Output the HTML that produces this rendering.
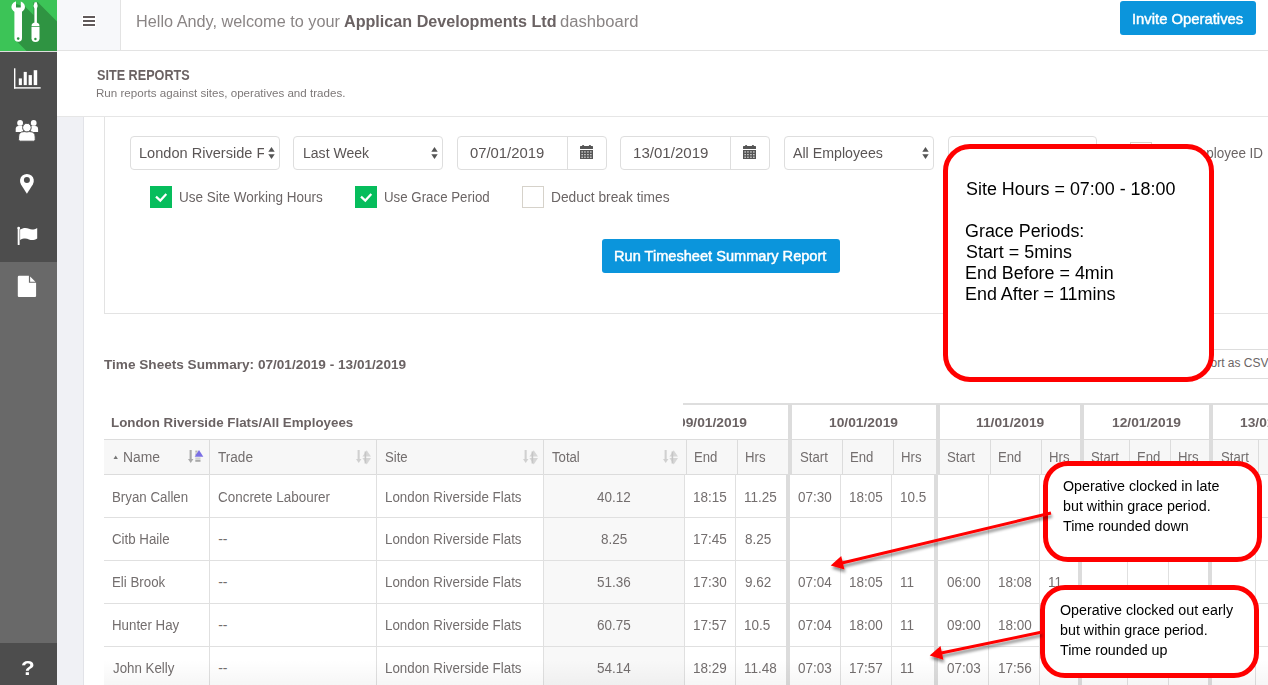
<!DOCTYPE html><html><head><meta charset="utf-8"><style>
html,body{margin:0;padding:0;width:1268px;height:685px;overflow:hidden;background:#fff;}
body{position:relative;font-family:"Liberation Sans", sans-serif;}
.t{position:absolute;white-space:nowrap;}
.b{position:absolute;box-sizing:border-box;}
svg{position:absolute;overflow:visible;}
</style></head><body>
<div class="b" style="left:57px;top:117px;width:27px;height:568px;background:#f0f1f5;border-right:1px solid #e2e3e8;"></div>
<div class="b" style="left:57px;top:0px;width:1211px;height:51px;background:#fff;border-bottom:1px solid #e3e3e3;"></div>
<div class="b" style="left:57px;top:0px;width:64px;height:50px;background:#f7f8fa;border-right:1px solid #e3e3e3;"></div>
<div class="b" style="left:82px;top:15px;width:14px;height:12px;background:#fff;"></div>
<div class="b" style="left:83px;top:16px;width:12px;height:2px;background:#615a5a;"></div>
<div class="b" style="left:83px;top:20px;width:12px;height:2px;background:#615a5a;"></div>
<div class="b" style="left:83px;top:24px;width:12px;height:2px;background:#615a5a;"></div>
<div class="t" style="left:135.68px;top:11.95px;font-size:16px;line-height:20px;color:#8a8585;transform:scaleX(1.0161);transform-origin:0 0;">Hello Andy, welcome to your</div>
<div class="t" style="left:343.60px;top:11.95px;font-size:16px;line-height:20px;color:#6a6263;font-weight:bold;transform:scaleX(1.0086);transform-origin:0 0;">Applican Developments Ltd</div>
<div class="t" style="left:559.87px;top:11.95px;font-size:16px;line-height:20px;color:#8a8585;transform:scaleX(1.0379);transform-origin:0 0;">dashboard</div>
<div class="b" style="left:1120px;top:1px;width:136px;height:34px;background:#0b95dc;border-radius:3px;"></div>
<div class="t" style="left:1132.22px;top:8.50px;font-size:15px;line-height:19px;color:#fff;transform:scaleX(0.9883);transform-origin:0 0;-webkit-text-stroke:0.45px #fff;">Invite Operatives</div>
<div class="b" style="left:57px;top:51px;width:1211px;height:66px;background:#fff;border-bottom:1px solid #e6e6e6;"></div>
<div class="t" style="left:96.64px;top:65.94px;font-size:14px;line-height:18px;color:#6a6263;font-weight:bold;transform:scaleX(0.9027);transform-origin:0 0;">SITE REPORTS</div>
<div class="t" style="left:96.05px;top:86.29px;font-size:11px;line-height:14px;color:#7d7878;transform:scaleX(1.0541);transform-origin:0 0;">Run reports against sites, operatives and trades.</div>
<div class="b" style="left:104px;top:117px;width:1164px;height:197px;border-left:1px solid #e3e3e3;border-bottom:1px solid #e3e3e3;"></div>
<div class="b" style="left:0px;top:0px;width:57px;height:685px;background:#4d4d4d;"></div>
<div class="b" style="left:0px;top:262px;width:57px;height:381px;background:#696969;"></div>
<div class="b" style="left:0px;top:51px;width:57px;height:1px;background:#dedede;"></div>
<svg style="left:0;top:0" width="57" height="51" viewBox="0 0 57 51">
<rect x="0" y="0" width="57" height="51" fill="#3cc457"/>
<polygon points="25,6.5 33.5,15 33.5,2 37.6,2 57,21.4 57,51 26.5,51 16.5,41 16,4" fill="#2f9442"/>
<mask id="jaw"><rect x="0" y="0" width="57" height="51" fill="#fff"/><rect x="16" y="-1" width="4.8" height="8.6" rx="0.6" fill="#000"/></mask>
<g mask="url(#jaw)" fill="#fff"><ellipse cx="18.2" cy="6.9" rx="6.8" ry="5.9"/><path d="M14.4,10 L22,10 L22,38 A3.8,3.8 0 0 1 14.4,38 Z"/></g>
<circle cx="18.2" cy="38.6" r="1.3" fill="#2f9442"/>
<path d="M34.6,2.3 L36.8,2.3 L37.7,6 L36.9,8.6 L36.9,23.5 L34.4,23.5 L34.4,8.6 L33.5,6 Z" fill="#fff"/>
<path d="M31.5,26.2 Q31.5,22.6 35.5,22.6 Q39.5,22.6 39.5,26.2 Z" fill="#fff"/>
<path d="M31.5,26.9 L39.5,26.9 L39.5,38.3 A4,3.6 0 0 1 31.5,38.3 Z" fill="#fff"/>
<circle cx="35.4" cy="39" r="1.2" fill="#2f9442"/>
</svg>
<svg style="left:0;top:60" width="57" height="40" viewBox="0 60 57 40">
<rect x="14" y="68.3" width="1.4" height="20.3" fill="#fff"/>
<rect x="14" y="87.2" width="26.7" height="1.4" fill="#fff"/>
<rect x="18.8" y="78.4" width="3.1" height="6.7" fill="#fff"/>
<rect x="23.7" y="71.9" width="3.1" height="13.2" fill="#fff"/>
<rect x="28.6" y="75.1" width="3.3" height="10" fill="#fff"/>
<rect x="33.7" y="70.2" width="3.5" height="14.9" fill="#fff"/>
</svg>
<svg style="left:0;top:110" width="57" height="40" viewBox="0 110 57 40">
<circle cx="20.1" cy="122.9" r="2.9" fill="#fff"/>
<circle cx="33.7" cy="122.9" r="2.9" fill="#fff"/>
<path d="M15.7,131.9 L15.7,129 Q15.7,126.1 18.6,126.1 L23,126.1 L23,131.9 Z" fill="#fff"/>
<path d="M38.1,131.9 L38.1,129 Q38.1,126.1 35.2,126.1 L30.8,126.1 L30.8,131.9 Z" fill="#fff"/>
<path d="M18.6,139.6 L18.6,137 Q18.6,131.6 24,131.6 L29.8,131.6 Q35.2,131.6 35.2,137 L35.2,139.6 Q35.2,141.2 33.6,141.2 L20.2,141.2 Q18.6,141.2 18.6,139.6 Z" fill="#fff" stroke="#4d4d4d" stroke-width="1"/>
<circle cx="26.9" cy="127.6" r="4.3" fill="#fff" stroke="#4d4d4d" stroke-width="1"/>
</svg>
<svg style="left:0;top:170" width="57" height="30" viewBox="0 170 57 30">
<path d="M26.9,193.8 L21,184.4 A6.9,6.9 0 1 1 32.8,184.4 Z" fill="#fff"/>
<circle cx="26.9" cy="180.1" r="3.0" fill="#4d4d4d"/>
</svg>
<svg style="left:0;top:222" width="57" height="26" viewBox="0 222 57 26">
<rect x="17.7" y="228" width="1.9" height="17" rx="0.6" fill="#fff"/>
<circle cx="18.65" cy="228.1" r="1.35" fill="#fff"/>
<path d="M20.1,229.6 C23,227.6 26.5,227.6 29,228.8 C31.5,230 34.5,229.6 37.2,227.9 L37.2,238.5 C34.5,240.2 31.5,240.6 29,239.4 C26.5,238.2 23,238.2 20.1,240 Z" fill="#fff"/>
</svg>
<svg style="left:0;top:272" width="57" height="30" viewBox="0 272 57 30">
<path d="M19,275.8 L28.9,275.8 L28.9,282.7 L36.1,282.7 L36.1,296 Q36.1,297.1 35,297.1 L18.9,297.1 Q17.8,297.1 17.8,296 L17.8,277 Q17.8,275.8 19,275.8 Z" fill="#fff"/>
<path d="M30.1,276.5 L35.4,281.7 L30.1,281.7 Z" fill="#fff"/>
</svg>
<div class="t" style="left:20.99px;top:655.56px;font-size:20px;line-height:25px;color:#fff;font-weight:bold;transform:scaleX(1.1176);transform-origin:0 0;">?</div>
<div class="b" style="left:130px;top:136px;width:150px;height:34px;border:1px solid #dedede;border-radius:4px;background:#fff;"></div>
<div style="position:absolute;left:132px;top:137px;width:132px;height:32px;overflow:hidden">
<div class="t" style="left:6.95px;top:7.14px;font-size:14px;line-height:18px;color:#5a5555;transform:scaleX(1.0410);transform-origin:0 0;">London Riverside Flats</div>
</div>
<svg style="left:268px;top:146px" width="8" height="14" viewBox="0 0 8 14">
<path d="M0.3,5.7 L3.5,1 L6.7,5.7 Z" fill="#555"/><path d="M0.3,8.3 L3.5,13 L6.7,8.3 Z" fill="#555"/></svg>
<div class="b" style="left:293px;top:136px;width:150px;height:34px;border:1px solid #dedede;border-radius:4px;background:#fff;"></div>
<div class="t" style="left:302.60px;top:144.14px;font-size:14px;line-height:18px;color:#5a5555;transform:scaleX(1.0031);transform-origin:0 0;">Last Week</div>
<svg style="left:431px;top:146px" width="8" height="14" viewBox="0 0 8 14">
<path d="M0.3,5.7 L3.5,1 L6.7,5.7 Z" fill="#555"/><path d="M0.3,8.3 L3.5,13 L6.7,8.3 Z" fill="#555"/></svg>
<div class="b" style="left:457px;top:136px;width:150px;height:34px;border:1px solid #dedede;border-radius:4px;background:#fff;"></div>
<div class="t" style="left:470.37px;top:144.14px;font-size:14px;line-height:18px;color:#5a5555;transform:scaleX(1.0595);transform-origin:0 0;">07/01/2019</div>
<div class="b" style="left:567px;top:137px;width:1px;height:32px;background:#dedede;"></div>
<svg style="left:580px;top:145px" width="13" height="14" viewBox="0 0 13 14">
<rect x="0" y="1" width="13" height="3" rx="0.5" fill="#555"/>
<rect x="2" y="0" width="2.2" height="2" rx="1" fill="#555"/><rect x="8.8" y="0" width="2.2" height="2" rx="1" fill="#555"/>
<rect x="0" y="5" width="13" height="9" fill="#555"/>
<g fill="#e8e8e8">
<rect x="1.5" y="6.3" width="1.3" height="1.3"/><rect x="4.3" y="6.3" width="1.3" height="1.3"/><rect x="7.3" y="6.3" width="1.3" height="1.3"/><rect x="10.2" y="6.3" width="1.3" height="1.3"/>
<rect x="1.5" y="9" width="1.3" height="1.3"/><rect x="4.3" y="9" width="1.3" height="1.3"/><rect x="7.3" y="9" width="1.3" height="1.3"/><rect x="10.2" y="9" width="1.3" height="1.3"/>
<rect x="1.5" y="11.6" width="1.3" height="1.3"/><rect x="4.3" y="11.6" width="1.3" height="1.3"/><rect x="7.3" y="11.6" width="1.3" height="1.3"/><rect x="10.2" y="11.6" width="1.3" height="1.3"/>
</g></svg>
<div class="b" style="left:620px;top:136px;width:150px;height:34px;border:1px solid #dedede;border-radius:4px;background:#fff;"></div>
<div class="t" style="left:633.12px;top:144.14px;font-size:14px;line-height:18px;color:#5a5555;transform:scaleX(1.0761);transform-origin:0 0;">13/01/2019</div>
<div class="b" style="left:730px;top:137px;width:1px;height:32px;background:#dedede;"></div>
<svg style="left:743px;top:145px" width="13" height="14" viewBox="0 0 13 14">
<rect x="0" y="1" width="13" height="3" rx="0.5" fill="#555"/>
<rect x="2" y="0" width="2.2" height="2" rx="1" fill="#555"/><rect x="8.8" y="0" width="2.2" height="2" rx="1" fill="#555"/>
<rect x="0" y="5" width="13" height="9" fill="#555"/>
<g fill="#e8e8e8">
<rect x="1.5" y="6.3" width="1.3" height="1.3"/><rect x="4.3" y="6.3" width="1.3" height="1.3"/><rect x="7.3" y="6.3" width="1.3" height="1.3"/><rect x="10.2" y="6.3" width="1.3" height="1.3"/>
<rect x="1.5" y="9" width="1.3" height="1.3"/><rect x="4.3" y="9" width="1.3" height="1.3"/><rect x="7.3" y="9" width="1.3" height="1.3"/><rect x="10.2" y="9" width="1.3" height="1.3"/>
<rect x="1.5" y="11.6" width="1.3" height="1.3"/><rect x="4.3" y="11.6" width="1.3" height="1.3"/><rect x="7.3" y="11.6" width="1.3" height="1.3"/><rect x="10.2" y="11.6" width="1.3" height="1.3"/>
</g></svg>
<div class="b" style="left:784px;top:136px;width:150px;height:34px;border:1px solid #dedede;border-radius:4px;background:#fff;"></div>
<div class="t" style="left:793.40px;top:144.14px;font-size:14px;line-height:18px;color:#5a5555;transform:scaleX(1.0136);transform-origin:0 0;">All Employees</div>
<svg style="left:922px;top:146px" width="8" height="14" viewBox="0 0 8 14">
<path d="M0.3,5.7 L3.5,1 L6.7,5.7 Z" fill="#555"/><path d="M0.3,8.3 L3.5,13 L6.7,8.3 Z" fill="#555"/></svg>
<div class="b" style="left:948px;top:136px;width:149px;height:34px;border:1px solid #dedede;border-radius:4px;background:#fff;"></div>
<div class="t" style="left:0.50px;top:144.14px;font-size:14px;line-height:18px;color:#5a5555;"></div>
<div class="b" style="left:1130px;top:142px;width:22px;height:22px;border:1px solid #d6d2ca;background:#fff;"></div>
<div class="t" style="left:1185.94px;top:144.14px;font-size:14px;line-height:18px;color:#6b6565;transform:scaleX(0.9617);transform-origin:0 0;">Employee ID</div>
<div class="b" style="left:150px;top:186px;width:22px;height:22px;background:#06bd5c;"></div>
<svg style="left:150px;top:186px" width="22" height="22" viewBox="0 0 22 22">
<path d="M6,10.6 L10.3,14.6 L16.3,8" fill="none" stroke="#fff" stroke-width="2.2" stroke-linecap="butt" stroke-linejoin="miter"/></svg>
<div class="t" style="left:178.54px;top:188.14px;font-size:14px;line-height:18px;color:#6b6565;transform:scaleX(0.9641);transform-origin:0 0;">Use Site Working Hours</div>
<div class="b" style="left:355px;top:186px;width:22px;height:22px;background:#06bd5c;"></div>
<svg style="left:355px;top:186px" width="22" height="22" viewBox="0 0 22 22">
<path d="M6,10.6 L10.3,14.6 L16.3,8" fill="none" stroke="#fff" stroke-width="2.2" stroke-linecap="butt" stroke-linejoin="miter"/></svg>
<div class="t" style="left:383.96px;top:188.14px;font-size:14px;line-height:18px;color:#6b6565;transform:scaleX(0.9497);transform-origin:0 0;">Use Grace Period</div>
<div class="b" style="left:522px;top:186px;width:22px;height:22px;border:1px solid #d6d2ca;background:#fff;"></div>
<div class="t" style="left:550.92px;top:188.14px;font-size:14px;line-height:18px;color:#6b6565;transform:scaleX(0.9832);transform-origin:0 0;">Deduct break times</div>
<div class="b" style="left:602px;top:239px;width:238px;height:34px;background:#0b95dc;border-radius:3px;"></div>
<div class="t" style="left:614.45px;top:247.34px;font-size:14px;line-height:18px;color:#fff;transform:scaleX(1.0419);transform-origin:0 0;-webkit-text-stroke:0.45px #fff;">Run Timesheet Summary Report</div>
<div class="t" style="left:104.40px;top:357.19px;font-size:13px;line-height:16px;color:#6a6263;font-weight:bold;transform:scaleX(1.0458);transform-origin:0 0;">Time Sheets Summary: 07/01/2019 - 13/01/2019</div>
<div class="b" style="left:1140px;top:349px;width:200px;height:30px;border:1px solid #dddddd;border-radius:3px;"></div>
<div class="t" style="left:1189.80px;top:356.14px;font-size:12px;line-height:15px;color:#6b6565;">Export as CSV</div>
<div class="b" style="left:683px;top:403px;width:600px;height:2px;background:#dedede;"></div>
<div class="b" style="left:683px;top:439px;width:600px;height:36px;background:#f7f7f7;"></div>
<div class="b" style="left:683px;top:439px;width:600px;height:1px;background:#dcdcdc;"></div>
<div class="b" style="left:683px;top:474px;width:600px;height:1px;background:#dcdcdc;"></div>
<div class="b" style="left:788px;top:404px;width:4px;height:70px;background:#dcdcdc;"></div>
<div class="b" style="left:936px;top:404px;width:4px;height:70px;background:#dcdcdc;"></div>
<div class="b" style="left:1080px;top:404px;width:4px;height:70px;background:#dcdcdc;"></div>
<div class="b" style="left:1209px;top:404px;width:4px;height:70px;background:#dcdcdc;"></div>
<div class="b" style="left:686px;top:439px;width:1px;height:35px;background:#dcdcdc;"></div>
<div class="b" style="left:737px;top:439px;width:1px;height:35px;background:#dcdcdc;"></div>
<div class="b" style="left:842px;top:439px;width:1px;height:35px;background:#dcdcdc;"></div>
<div class="b" style="left:893px;top:439px;width:1px;height:35px;background:#dcdcdc;"></div>
<div class="b" style="left:990px;top:439px;width:1px;height:35px;background:#dcdcdc;"></div>
<div class="b" style="left:1041px;top:439px;width:1px;height:35px;background:#dcdcdc;"></div>
<div class="b" style="left:1129px;top:439px;width:1px;height:35px;background:#dcdcdc;"></div>
<div class="b" style="left:1170px;top:439px;width:1px;height:35px;background:#dcdcdc;"></div>
<div class="b" style="left:1258px;top:439px;width:1px;height:35px;background:#dcdcdc;"></div>
<div class="t" style="left:678.00px;top:415.49px;font-size:13px;line-height:16px;color:#6a6263;font-weight:bold;transform:scaleX(1.0600);transform-origin:0 0;">09/01/2019</div>
<div class="t" style="left:828.84px;top:415.49px;font-size:13px;line-height:16px;color:#6a6263;font-weight:bold;transform:scaleX(1.0600);transform-origin:0 0;">10/01/2019</div>
<div class="t" style="left:975.71px;top:415.49px;font-size:13px;line-height:16px;color:#6a6263;font-weight:bold;transform:scaleX(1.0600);transform-origin:0 0;">11/01/2019</div>
<div class="t" style="left:1111.84px;top:415.49px;font-size:13px;line-height:16px;color:#6a6263;font-weight:bold;transform:scaleX(1.0600);transform-origin:0 0;">12/01/2019</div>
<div class="t" style="left:1240.34px;top:415.49px;font-size:13px;line-height:16px;color:#6a6263;font-weight:bold;transform:scaleX(1.0600);transform-origin:0 0;">13/01/2019</div>
<div class="t" style="left:694.37px;top:447.84px;font-size:14px;line-height:18px;color:#736e6e;transform:scaleX(0.9400);transform-origin:0 0;">End</div>
<div class="t" style="left:745.17px;top:447.84px;font-size:14px;line-height:18px;color:#736e6e;transform:scaleX(0.9400);transform-origin:0 0;">Hrs</div>
<div class="t" style="left:799.64px;top:447.84px;font-size:14px;line-height:18px;color:#736e6e;transform:scaleX(0.9400);transform-origin:0 0;">Start</div>
<div class="t" style="left:850.47px;top:447.84px;font-size:14px;line-height:18px;color:#736e6e;transform:scaleX(0.9400);transform-origin:0 0;">End</div>
<div class="t" style="left:901.27px;top:447.84px;font-size:14px;line-height:18px;color:#736e6e;transform:scaleX(0.9400);transform-origin:0 0;">Hrs</div>
<div class="t" style="left:947.34px;top:447.84px;font-size:14px;line-height:18px;color:#736e6e;transform:scaleX(0.9400);transform-origin:0 0;">Start</div>
<div class="t" style="left:998.27px;top:447.84px;font-size:14px;line-height:18px;color:#736e6e;transform:scaleX(0.9400);transform-origin:0 0;">End</div>
<div class="t" style="left:1049.47px;top:447.84px;font-size:14px;line-height:18px;color:#736e6e;transform:scaleX(0.9400);transform-origin:0 0;">Hrs</div>
<div class="t" style="left:1091.34px;top:447.84px;font-size:14px;line-height:18px;color:#736e6e;transform:scaleX(0.9400);transform-origin:0 0;">Start</div>
<div class="t" style="left:1137.47px;top:447.84px;font-size:14px;line-height:18px;color:#736e6e;transform:scaleX(0.9400);transform-origin:0 0;">End</div>
<div class="t" style="left:1178.27px;top:447.84px;font-size:14px;line-height:18px;color:#736e6e;transform:scaleX(0.9400);transform-origin:0 0;">Hrs</div>
<div class="t" style="left:1220.74px;top:447.84px;font-size:14px;line-height:18px;color:#736e6e;transform:scaleX(0.9400);transform-origin:0 0;">Start</div>
<div class="b" style="left:683px;top:517px;width:600px;height:1px;background:#e0e0e0;"></div>
<div class="b" style="left:683px;top:560px;width:600px;height:1px;background:#e0e0e0;"></div>
<div class="b" style="left:683px;top:603px;width:600px;height:1px;background:#e0e0e0;"></div>
<div class="b" style="left:683px;top:646px;width:600px;height:1px;background:#e0e0e0;"></div>
<div class="b" style="left:683px;top:689px;width:600px;height:1px;background:#e0e0e0;"></div>
<div class="b" style="left:786px;top:474px;width:4px;height:220px;background:#dcdcdc;"></div>
<div class="b" style="left:934px;top:474px;width:4px;height:220px;background:#dcdcdc;"></div>
<div class="b" style="left:1078px;top:474px;width:4px;height:220px;background:#dcdcdc;"></div>
<div class="b" style="left:1208px;top:474px;width:4px;height:220px;background:#dcdcdc;"></div>
<div class="b" style="left:684px;top:474px;width:1px;height:220px;background:#e0e0e0;"></div>
<div class="b" style="left:735px;top:474px;width:1px;height:220px;background:#e0e0e0;"></div>
<div class="b" style="left:840px;top:474px;width:1px;height:220px;background:#e0e0e0;"></div>
<div class="b" style="left:891px;top:474px;width:1px;height:220px;background:#e0e0e0;"></div>
<div class="b" style="left:988px;top:474px;width:1px;height:220px;background:#e0e0e0;"></div>
<div class="b" style="left:1039px;top:474px;width:1px;height:220px;background:#e0e0e0;"></div>
<div class="b" style="left:1127px;top:474px;width:1px;height:220px;background:#e0e0e0;"></div>
<div class="b" style="left:1168px;top:474px;width:1px;height:220px;background:#e0e0e0;"></div>
<div class="b" style="left:1255px;top:474px;width:1px;height:220px;background:#e0e0e0;"></div>
<div class="t" style="left:692.84px;top:487.54px;font-size:14px;line-height:18px;color:#736e6e;transform:scaleX(0.9640);transform-origin:0 0;">18:15</div>
<div class="t" style="left:744.04px;top:487.54px;font-size:14px;line-height:18px;color:#736e6e;transform:scaleX(0.9640);transform-origin:0 0;">11.25</div>
<div class="t" style="left:798.22px;top:487.54px;font-size:14px;line-height:18px;color:#736e6e;transform:scaleX(0.9640);transform-origin:0 0;">07:30</div>
<div class="t" style="left:848.94px;top:487.54px;font-size:14px;line-height:18px;color:#736e6e;transform:scaleX(0.9640);transform-origin:0 0;">18:05</div>
<div class="t" style="left:899.94px;top:487.54px;font-size:14px;line-height:18px;color:#736e6e;transform:scaleX(0.9640);transform-origin:0 0;">10.5</div>
<div class="t" style="left:692.84px;top:530.44px;font-size:14px;line-height:18px;color:#736e6e;transform:scaleX(0.9640);transform-origin:0 0;">17:45</div>
<div class="t" style="left:744.52px;top:530.44px;font-size:14px;line-height:18px;color:#736e6e;transform:scaleX(0.9640);transform-origin:0 0;">8.25</div>
<div class="t" style="left:692.84px;top:573.44px;font-size:14px;line-height:18px;color:#736e6e;transform:scaleX(0.9640);transform-origin:0 0;">17:30</div>
<div class="t" style="left:744.52px;top:573.44px;font-size:14px;line-height:18px;color:#736e6e;transform:scaleX(0.9640);transform-origin:0 0;">9.62</div>
<div class="t" style="left:798.22px;top:573.44px;font-size:14px;line-height:18px;color:#736e6e;transform:scaleX(0.9640);transform-origin:0 0;">07:04</div>
<div class="t" style="left:848.94px;top:573.44px;font-size:14px;line-height:18px;color:#736e6e;transform:scaleX(0.9640);transform-origin:0 0;">18:05</div>
<div class="t" style="left:899.94px;top:573.44px;font-size:14px;line-height:18px;color:#736e6e;transform:scaleX(0.9640);transform-origin:0 0;">11</div>
<div class="t" style="left:946.72px;top:573.44px;font-size:14px;line-height:18px;color:#736e6e;transform:scaleX(0.9640);transform-origin:0 0;">06:00</div>
<div class="t" style="left:997.64px;top:573.44px;font-size:14px;line-height:18px;color:#736e6e;transform:scaleX(0.9640);transform-origin:0 0;">18:08</div>
<div class="t" style="left:1048.24px;top:573.44px;font-size:14px;line-height:18px;color:#736e6e;transform:scaleX(0.9640);transform-origin:0 0;">11</div>
<div class="t" style="left:692.84px;top:616.34px;font-size:14px;line-height:18px;color:#736e6e;transform:scaleX(0.9640);transform-origin:0 0;">17:57</div>
<div class="t" style="left:744.04px;top:616.34px;font-size:14px;line-height:18px;color:#736e6e;transform:scaleX(0.9640);transform-origin:0 0;">10.5</div>
<div class="t" style="left:798.22px;top:616.34px;font-size:14px;line-height:18px;color:#736e6e;transform:scaleX(0.9640);transform-origin:0 0;">07:04</div>
<div class="t" style="left:848.94px;top:616.34px;font-size:14px;line-height:18px;color:#736e6e;transform:scaleX(0.9640);transform-origin:0 0;">18:00</div>
<div class="t" style="left:899.94px;top:616.34px;font-size:14px;line-height:18px;color:#736e6e;transform:scaleX(0.9640);transform-origin:0 0;">11</div>
<div class="t" style="left:946.72px;top:616.34px;font-size:14px;line-height:18px;color:#736e6e;transform:scaleX(0.9640);transform-origin:0 0;">09:00</div>
<div class="t" style="left:997.64px;top:616.34px;font-size:14px;line-height:18px;color:#736e6e;transform:scaleX(0.9640);transform-origin:0 0;">18:00</div>
<div class="t" style="left:692.84px;top:659.34px;font-size:14px;line-height:18px;color:#736e6e;transform:scaleX(0.9640);transform-origin:0 0;">18:29</div>
<div class="t" style="left:744.04px;top:659.34px;font-size:14px;line-height:18px;color:#736e6e;transform:scaleX(0.9640);transform-origin:0 0;">11.48</div>
<div class="t" style="left:798.22px;top:659.34px;font-size:14px;line-height:18px;color:#736e6e;transform:scaleX(0.9640);transform-origin:0 0;">07:03</div>
<div class="t" style="left:848.94px;top:659.34px;font-size:14px;line-height:18px;color:#736e6e;transform:scaleX(0.9640);transform-origin:0 0;">17:57</div>
<div class="t" style="left:899.94px;top:659.34px;font-size:14px;line-height:18px;color:#736e6e;transform:scaleX(0.9640);transform-origin:0 0;">11</div>
<div class="t" style="left:946.72px;top:659.34px;font-size:14px;line-height:18px;color:#736e6e;transform:scaleX(0.9640);transform-origin:0 0;">07:03</div>
<div class="t" style="left:997.64px;top:659.34px;font-size:14px;line-height:18px;color:#736e6e;transform:scaleX(0.9640);transform-origin:0 0;">17:56</div>
<div class="b" style="left:104px;top:390px;width:579px;height:49px;background:#fff;"></div>
<div class="t" style="left:111.48px;top:414.69px;font-size:13px;line-height:16px;color:#6a6263;font-weight:bold;transform:scaleX(1.0256);transform-origin:0 0;">London Riverside Flats/All Employees</div>
<div class="b" style="left:104px;top:439px;width:582px;height:36px;background:#f7f7f7;"></div>
<div class="b" style="left:104px;top:439px;width:582px;height:1px;background:#dcdcdc;"></div>
<div class="b" style="left:104px;top:474px;width:582px;height:1px;background:#dcdcdc;"></div>
<div class="b" style="left:209px;top:439px;width:1px;height:36px;background:#dcdcdc;"></div>
<div class="b" style="left:376px;top:439px;width:1px;height:36px;background:#dcdcdc;"></div>
<div class="b" style="left:543px;top:439px;width:1px;height:36px;background:#dcdcdc;"></div>
<div class="b" style="left:686px;top:439px;width:1px;height:36px;background:#dcdcdc;"></div>
<div class="b" style="left:104px;top:475px;width:580px;height:215px;background:#fff;"></div>
<div class="b" style="left:544px;top:475px;width:140px;height:215px;background:#f8f8f8;"></div>
<div class="b" style="left:104px;top:517px;width:581px;height:1px;background:#e0e0e0;"></div>
<div class="b" style="left:104px;top:560px;width:581px;height:1px;background:#e0e0e0;"></div>
<div class="b" style="left:104px;top:603px;width:581px;height:1px;background:#e0e0e0;"></div>
<div class="b" style="left:104px;top:646px;width:581px;height:1px;background:#e0e0e0;"></div>
<div class="b" style="left:104px;top:689px;width:581px;height:1px;background:#e0e0e0;"></div>
<div class="b" style="left:209px;top:474px;width:1px;height:215px;background:#e0e0e0;"></div>
<div class="b" style="left:376px;top:474px;width:1px;height:215px;background:#e0e0e0;"></div>
<div class="b" style="left:543px;top:474px;width:1px;height:215px;background:#e0e0e0;"></div>
<div class="b" style="left:684px;top:474px;width:1px;height:215px;background:#e0e0e0;"></div>
<div class="t" style="left:123.41px;top:448.44px;font-size:14px;line-height:18px;color:#736e6e;transform:scaleX(0.9916);transform-origin:0 0;">Name</div>
<div class="t" style="left:218.31px;top:448.44px;font-size:14px;line-height:18px;color:#736e6e;transform:scaleX(0.9688);transform-origin:0 0;">Trade</div>
<div class="t" style="left:384.84px;top:448.44px;font-size:14px;line-height:18px;color:#736e6e;transform:scaleX(0.9400);transform-origin:0 0;">Site</div>
<div class="t" style="left:552.22px;top:448.44px;font-size:14px;line-height:18px;color:#736e6e;transform:scaleX(0.9400);transform-origin:0 0;">Total</div>
<svg style="left:113px;top:454px" width="6" height="6" viewBox="0 0 6 6"><path d="M0.5,5 L2.7,1.5 L4.9,5 Z" fill="#777"/></svg>
<svg style="left:188.4px;top:450px" width="16" height="15" viewBox="0 0 16 15">
<rect x="1.6" y="0" width="2.1" height="9.5" fill="#a9a9a9"/><path d="M0,9 L5.4,9 L2.7,12.9 Z" fill="#a9a9a9"/><rect x="7.3" y="0.6" width="2.2" height="2" fill="#b5b5b5"/><rect x="7.3" y="3.4" width="2.2" height="2" fill="#b5b5b5"/><rect x="7.3" y="7.4" width="5.2" height="1.6" fill="#d0d0d0"/><rect x="7.3" y="9.6" width="5.2" height="2.2" fill="#a9a9a9"/><path d="M6.7,6.7 L15.3,6.7 L11,0 Z" fill="#7b6fe4"/></svg>
<svg style="left:355.6px;top:450px" width="16" height="15" viewBox="0 0 16 15">
<rect x="1.6" y="0" width="2.1" height="9.5" fill="#d0d0d0"/><path d="M0,9 L5.4,9 L2.7,12.9 Z" fill="#d0d0d0"/><path d="M6.4,6.5 L15,6.5 L10.7,0.2 Z" fill="#d6d6d6"/><path d="M6.4,8.1 L15,8.1 L10.7,14.5 Z" fill="#d6d6d6"/><rect x="8.6" y="1.5" width="1.6" height="12" fill="#c6c6c6"/></svg>
<svg style="left:522.8px;top:450px" width="16" height="15" viewBox="0 0 16 15">
<rect x="1.6" y="0" width="2.1" height="9.5" fill="#d0d0d0"/><path d="M0,9 L5.4,9 L2.7,12.9 Z" fill="#d0d0d0"/><path d="M6.4,6.5 L15,6.5 L10.7,0.2 Z" fill="#d6d6d6"/><path d="M6.4,8.1 L15,8.1 L10.7,14.5 Z" fill="#d6d6d6"/><rect x="8.6" y="1.5" width="1.6" height="12" fill="#c6c6c6"/></svg>
<svg style="left:663px;top:450px" width="16" height="15" viewBox="0 0 16 15">
<rect x="1.6" y="0" width="2.1" height="9.5" fill="#d0d0d0"/><path d="M0,9 L5.4,9 L2.7,12.9 Z" fill="#d0d0d0"/><path d="M6.4,6.5 L15,6.5 L10.7,0.2 Z" fill="#d6d6d6"/><path d="M6.4,8.1 L15,8.1 L10.7,14.5 Z" fill="#d6d6d6"/><rect x="8.6" y="1.5" width="1.6" height="12" fill="#c6c6c6"/></svg>
<div class="t" style="left:111.75px;top:487.54px;font-size:14px;line-height:18px;color:#736e6e;transform:scaleX(0.9500);transform-origin:0 0;">Bryan Callen</div>
<div class="t" style="left:218.13px;top:487.54px;font-size:14px;line-height:18px;color:#736e6e;transform:scaleX(0.9600);transform-origin:0 0;">Concrete Labourer</div>
<div class="t" style="left:384.95px;top:487.54px;font-size:14px;line-height:18px;color:#736e6e;transform:scaleX(0.9534);transform-origin:0 0;">London Riverside Flats</div>
<div class="t" style="left:597.12px;top:487.54px;font-size:14px;line-height:18px;color:#736e6e;transform:scaleX(0.9640);transform-origin:0 0;">40.12</div>
<div class="t" style="left:112.13px;top:530.44px;font-size:14px;line-height:18px;color:#736e6e;transform:scaleX(0.9500);transform-origin:0 0;">Citb Haile</div>
<div class="t" style="left:218.20px;top:530.44px;font-size:14px;line-height:18px;color:#736e6e;">--</div>
<div class="t" style="left:384.95px;top:530.44px;font-size:14px;line-height:18px;color:#736e6e;transform:scaleX(0.9534);transform-origin:0 0;">London Riverside Flats</div>
<div class="t" style="left:600.64px;top:530.44px;font-size:14px;line-height:18px;color:#736e6e;transform:scaleX(0.9640);transform-origin:0 0;">8.25</div>
<div class="t" style="left:111.75px;top:573.44px;font-size:14px;line-height:18px;color:#736e6e;transform:scaleX(0.9500);transform-origin:0 0;">Eli Brook</div>
<div class="t" style="left:218.20px;top:573.44px;font-size:14px;line-height:18px;color:#736e6e;">--</div>
<div class="t" style="left:384.95px;top:573.44px;font-size:14px;line-height:18px;color:#736e6e;transform:scaleX(0.9534);transform-origin:0 0;">London Riverside Flats</div>
<div class="t" style="left:596.93px;top:573.44px;font-size:14px;line-height:18px;color:#736e6e;transform:scaleX(0.9640);transform-origin:0 0;">51.36</div>
<div class="t" style="left:111.75px;top:616.34px;font-size:14px;line-height:18px;color:#736e6e;transform:scaleX(0.9500);transform-origin:0 0;">Hunter Hay</div>
<div class="t" style="left:218.20px;top:616.34px;font-size:14px;line-height:18px;color:#736e6e;">--</div>
<div class="t" style="left:384.95px;top:616.34px;font-size:14px;line-height:18px;color:#736e6e;transform:scaleX(0.9534);transform-origin:0 0;">London Riverside Flats</div>
<div class="t" style="left:596.88px;top:616.34px;font-size:14px;line-height:18px;color:#736e6e;transform:scaleX(0.9640);transform-origin:0 0;">60.75</div>
<div class="t" style="left:112.61px;top:659.34px;font-size:14px;line-height:18px;color:#736e6e;transform:scaleX(0.9500);transform-origin:0 0;">John Kelly</div>
<div class="t" style="left:218.20px;top:659.34px;font-size:14px;line-height:18px;color:#736e6e;">--</div>
<div class="t" style="left:384.95px;top:659.34px;font-size:14px;line-height:18px;color:#736e6e;transform:scaleX(0.9534);transform-origin:0 0;">London Riverside Flats</div>
<div class="t" style="left:596.83px;top:659.34px;font-size:14px;line-height:18px;color:#736e6e;transform:scaleX(0.9640);transform-origin:0 0;">54.14</div>
<div class="b" style="left:104px;top:660px;width:1164px;height:25px;background:linear-gradient(to bottom, rgba(0,0,0,0), rgba(0,0,0,0.035));"></div>
<div class="b" style="left:943px;top:144px;width:271px;height:238px;border:5px solid #ff0000;border-radius:27px;background:#fff;"></div>
<div class="t" style="left:965.50px;top:177.76px;font-size:18px;line-height:22px;color:#000;transform:scaleX(0.9940);transform-origin:0 0;">Site Hours = 07:00 - 18:00</div>
<div class="t" style="left:965.41px;top:220.06px;font-size:18px;line-height:22px;color:#000;transform:scaleX(0.9940);transform-origin:0 0;">Grace Periods:</div>
<div class="t" style="left:965.50px;top:241.06px;font-size:18px;line-height:22px;color:#000;transform:scaleX(0.9940);transform-origin:0 0;">Start = 5mins</div>
<div class="t" style="left:964.81px;top:262.06px;font-size:18px;line-height:22px;color:#000;transform:scaleX(0.9940);transform-origin:0 0;">End Before = 4min</div>
<div class="t" style="left:964.81px;top:283.06px;font-size:18px;line-height:22px;color:#000;transform:scaleX(0.9940);transform-origin:0 0;">End After = 11mins</div>
<div class="b" style="left:1043px;top:461px;width:219px;height:101px;border:5px solid #ff0000;border-radius:25px;background:#fff;"></div>
<div class="t" style="left:1063.09px;top:476.94px;font-size:14px;line-height:18px;color:#000;transform:scaleX(1.0200);transform-origin:0 0;">Operative clocked in late</div>
<div class="t" style="left:1062.88px;top:497.44px;font-size:14px;line-height:18px;color:#000;transform:scaleX(1.0200);transform-origin:0 0;">but within grace period.</div>
<div class="t" style="left:1063.49px;top:516.94px;font-size:14px;line-height:18px;color:#000;transform:scaleX(1.0200);transform-origin:0 0;">Time rounded down</div>
<div class="b" style="left:1040px;top:585px;width:219px;height:93px;border:5px solid #ff0000;border-radius:25px;background:#fff;"></div>
<div class="t" style="left:1059.79px;top:601.24px;font-size:14px;line-height:18px;color:#000;transform:scaleX(1.0200);transform-origin:0 0;">Operative clocked out early</div>
<div class="t" style="left:1059.58px;top:621.04px;font-size:14px;line-height:18px;color:#000;transform:scaleX(1.0200);transform-origin:0 0;">but within grace period.</div>
<div class="t" style="left:1060.19px;top:640.74px;font-size:14px;line-height:18px;color:#000;transform:scaleX(1.0200);transform-origin:0 0;">Time rounded up</div>
<svg style="left:0;top:0" width="1268" height="685" viewBox="0 0 1268 685">
<defs><filter id="sh1051" x="-20%" y="-50%" width="140%" height="200%"><feGaussianBlur in="SourceAlpha" stdDeviation="1.6"/><feOffset dx="1" dy="3"/><feComponentTransfer><feFuncA type="linear" slope="0.45"/></feComponentTransfer><feMerge><feMergeNode/><feMergeNode in="SourceGraphic"/></feMerge></filter></defs>
<g filter="url(#sh1051)"><line x1="1051" y1="513" x2="840.9" y2="563.2" stroke="#ff0000" stroke-width="3"/>
<polygon points="830.7,565.6 841.2,555.9 844.5,569.5" fill="#ff0000"/></g></svg>
<svg style="left:0;top:0" width="1268" height="685" viewBox="0 0 1268 685">
<defs><filter id="sh1041" x="-20%" y="-50%" width="140%" height="200%"><feGaussianBlur in="SourceAlpha" stdDeviation="1.6"/><feOffset dx="1" dy="3"/><feComponentTransfer><feFuncA type="linear" slope="0.45"/></feComponentTransfer><feMerge><feMergeNode/><feMergeNode in="SourceGraphic"/></feMerge></filter></defs>
<g filter="url(#sh1041)"><line x1="1041" y1="632.3" x2="940.0" y2="653.3" stroke="#ff0000" stroke-width="3"/>
<polygon points="929.7,655.4 940.5,646.0 943.4,659.7" fill="#ff0000"/></g></svg>
</body></html>
